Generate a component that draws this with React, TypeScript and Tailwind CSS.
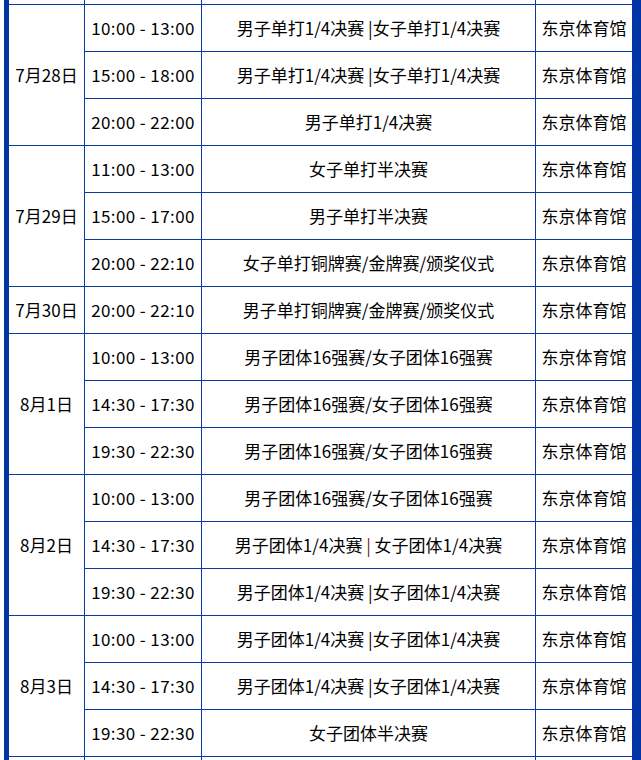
import React from "react";

type Row = { time: string; event: React.ReactNode };
type Group = { date: string; rows: Row[] };

const A = "男子单打1/4决赛 |女子单打1/4决赛";
const T16 = "男子团体16强赛/女子团体16强赛";
const T4 = "男子团体1/4决赛 |女子团体1/4决赛";

const groups: Group[] = [
  {
    date: "7月28日",
    rows: [
      { time: "10:00 - 13:00", event: A },
      { time: "15:00 - 18:00", event: A },
      { time: "20:00 - 22:00", event: "男子单打1/4决赛" },
    ],
  },
  {
    date: "7月29日",
    rows: [
      { time: "11:00 - 13:00", event: "女子单打半决赛" },
      { time: "15:00 - 17:00", event: "男子单打半决赛" },
      { time: "20:00 - 22:10", event: "女子单打铜牌赛/金牌赛/颁奖仪式" },
    ],
  },
  {
    date: "7月30日",
    rows: [{ time: "20:00 - 22:10", event: "男子单打铜牌赛/金牌赛/颁奖仪式" }],
  },
  {
    date: "8月1日",
    rows: [
      { time: "10:00 - 13:00", event: T16 },
      { time: "14:30 - 17:30", event: T16 },
      { time: "19:30 - 22:30", event: T16 },
    ],
  },
  {
    date: "8月2日",
    rows: [
      { time: "10:00 - 13:00", event: T16 },
      {
        time: "14:30 - 17:30",
        event: (
          <>
            男子团体1/4决赛 <span className="text-[#6e1414]">|</span> 女子团体1/4决赛
          </>
        ),
      },
      { time: "19:30 - 22:30", event: T4 },
    ],
  },
  {
    date: "8月3日",
    rows: [
      { time: "10:00 - 13:00", event: T4 },
      { time: "14:30 - 17:30", event: T4 },
      { time: "19:30 - 22:30", event: "女子团体半决赛" },
    ],
  },
];

const cell =
  "border border-[#0b3b9c] p-0 text-center align-middle whitespace-nowrap";

export default function App() {
  return (
    <div className="bg-white w-[641px] h-[760px] overflow-hidden">
      <div
        className="ml-[4px] w-[637px] h-[760px] overflow-hidden border-l-[5px] border-r-[9px] border-[#0035a3] text-black text-[17px]"
        style={{ fontFamily: '"Noto Sans CJK SC", "Noto Sans", sans-serif' }}
      >
        <table className="w-[624px] table-fixed border-collapse -ml-px">
          <colgroup>
            <col className="w-[76px]" />
            <col className="w-[117px]" />
            <col className="w-[334px]" />
            <col className="w-[97px]" />
          </colgroup>
          <tbody>
            <tr className="h-[4px]">
              <td className={`${cell} border-t-0`}></td>
              <td className={`${cell} border-t-0`}></td>
              <td className={`${cell} border-t-0`}></td>
              <td className={`${cell} border-t-0`}></td>
            </tr>
            {groups.map((g) =>
              g.rows.map((r, i) => (
                <tr key={g.date + i} className="h-[47px]">
                  {i === 0 && (
                    <td className={cell} rowSpan={g.rows.length}>
                      {g.date}
                    </td>
                  )}
                  <td className={`${cell} tracking-[0.4px]`}>{r.time}</td>
                  <td className={cell}>{r.event}</td>
                  <td className={cell}>东京体育馆</td>
                </tr>
              ))
            )}
            <tr className="h-[47px]">
              <td className={cell}></td>
              <td className={cell}></td>
              <td className={cell}></td>
              <td className={cell}></td>
            </tr>
          </tbody>
        </table>
      </div>
    </div>
  );
}
